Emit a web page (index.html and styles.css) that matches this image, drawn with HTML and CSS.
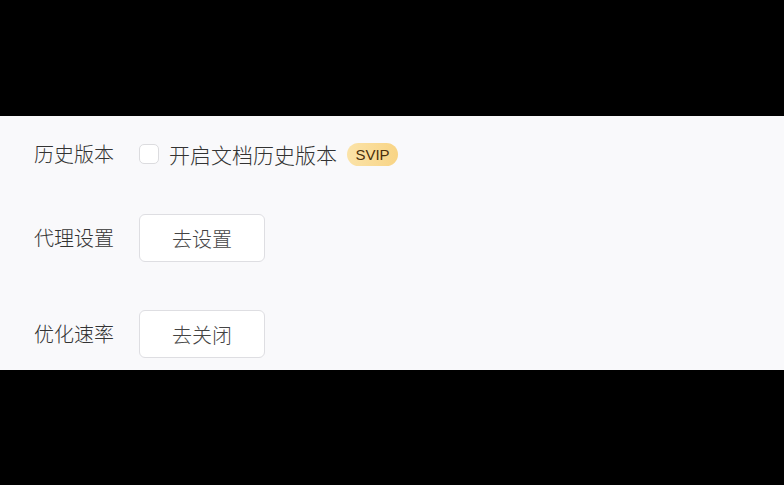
FILE: index.html
```html
<!DOCTYPE html>
<html lang="zh-CN">
<head>
<meta charset="utf-8">
<title>设置</title>
<link rel="stylesheet" href="styles.css">
</head>
<body>
<div class="top-band"></div>
<section class="panel">
  <div class="row row-check">
    <span class="label">历史版本</span>
    <label class="check">
      <span class="check-box"></span>
      <span class="check-text">开启文档历史版本</span>
    </label>
    <span class="badge">SVIP</span>
  </div>
  <div class="row">
    <span class="label">代理设置</span>
    <button class="btn">去设置</button>
  </div>
  <div class="row">
    <span class="label">优化速率</span>
    <button class="btn">去关闭</button>
  </div>
</section>
</body>
</html>
```

FILE: styles.css
```css
html, body {
  margin: 0;
  padding: 0;
  background: #000;
  height: 485px;
  overflow: hidden;
}
body {
  font-family: "Noto Sans CJK SC", "Noto Sans", sans-serif;
  font-weight: 300;
  color: #3a3a3a;
}
.top-band {
  height: 116px;
}
.panel {
  height: 254px;
  box-sizing: border-box;
  background: #f9f9fb;
  padding: 26px 0 12px 34px;
  display: flex;
  flex-direction: column;
  gap: 48px;
}
.row {
  display: flex;
  align-items: center;
  height: 48px;
}
.row-check {
  height: 24px;
}
.label {
  width: 105px;
  font-size: 20px;
  line-height: 24px;
  color: #333;
}
.check {
  display: flex;
  align-items: center;
}
.check-box {
  width: 20px;
  height: 20px;
  border: 1px solid #dcdcdf;
  border-radius: 5px;
  background: #fff;
  box-sizing: border-box;
}
.check-text {
  margin-left: 10px;
  font-size: 21px;
  line-height: 24px;
  color: #333;
}
.badge {
  margin-left: 10px;
  width: 51px;
  height: 23px;
  border-radius: 12px;
  background: linear-gradient(90deg, #fbe3a8, #f8d485);
  color: #4a2f0c;
  font-family: "Liberation Sans", Arial, sans-serif;
  font-weight: 400;
  font-size: 15px;
  line-height: 23px;
  text-align: center;
}
.btn {
  width: 126px;
  height: 48px;
  box-sizing: border-box;
  border: 1px solid #dedee2;
  border-radius: 6px;
  background: #fff;
  font-family: "Noto Sans CJK SC", "Noto Sans", sans-serif;
  font-weight: 300;
  font-size: 20px;
  color: #444;
  padding: 0;
}
```
